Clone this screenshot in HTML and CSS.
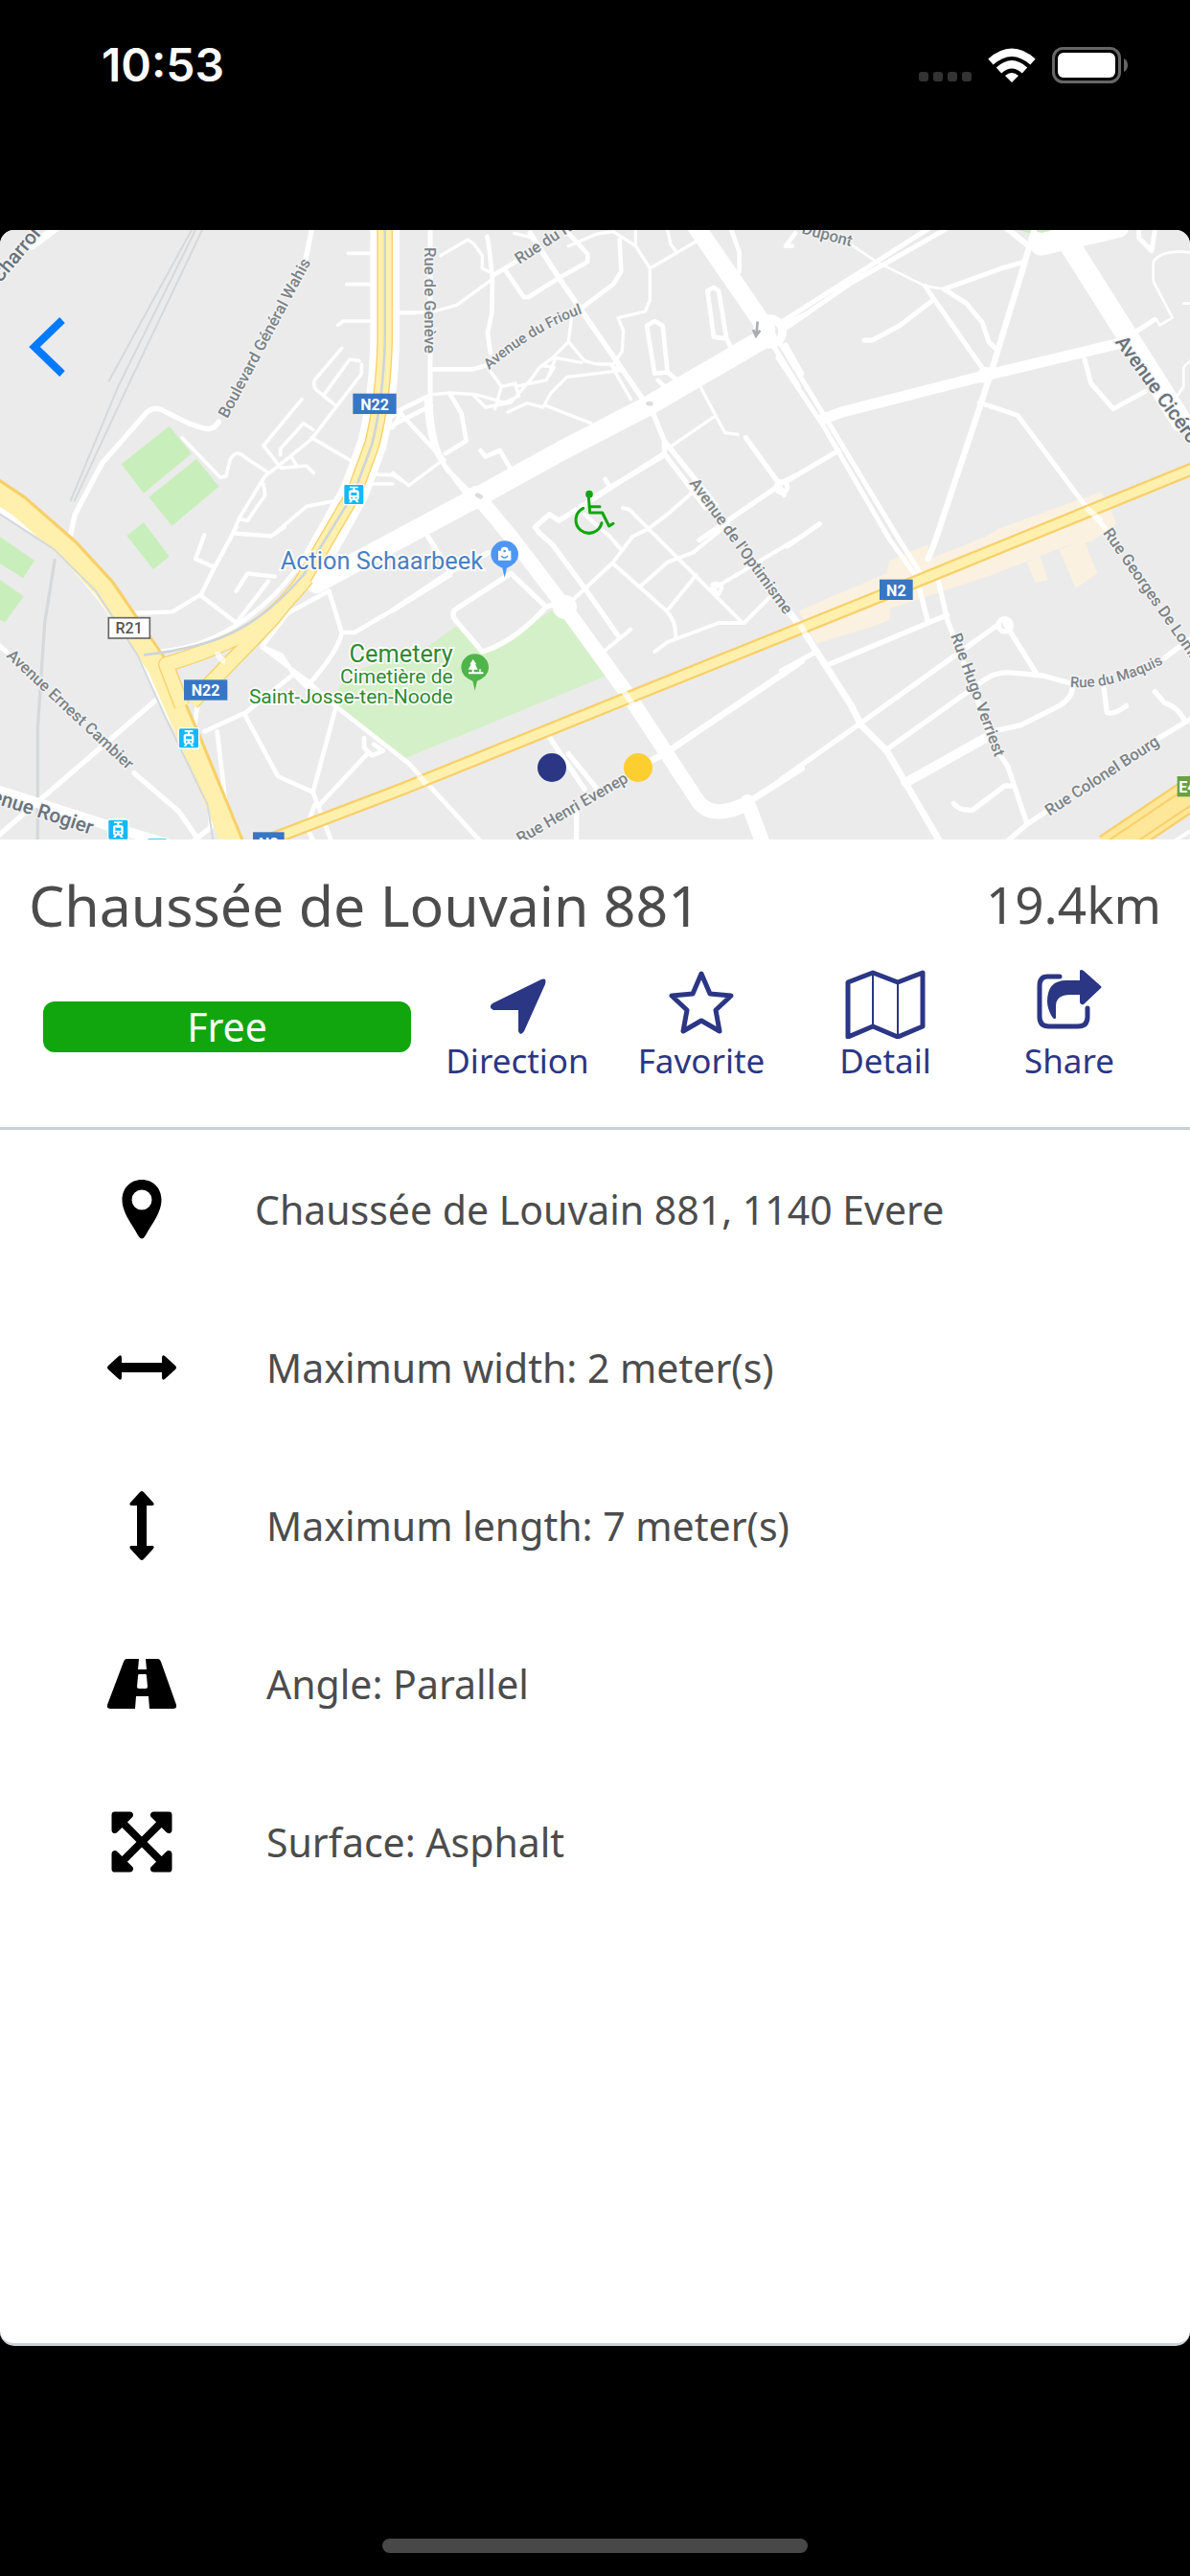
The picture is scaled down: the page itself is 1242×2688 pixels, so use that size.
FILE: index.html
```html
<!DOCTYPE html>
<html lang="en">
<head>
<meta charset="utf-8">
<meta name="viewport" content="width=device-width, initial-scale=1">
<title>Chaussée de Louvain 881</title>
<link rel="stylesheet" href="styles.css">
</head>
<body>
<div class="screen">
  <header class="status">
    <time class="clock">10:53</time>
    <div class="indicators">
      <div class="cell"><i></i><i></i><i></i><i></i></div>
      <svg class="wifi" viewBox="0 0 50 36" aria-label="Wi-Fi"><g fill="none" stroke="#fff" stroke-width="8"><path d="M3 14.500Q25 -5 47 14.500"/><path d="M11.500 23.500Q25 11 38.500 23.500"/></g><path d="M18 29Q25 23 32 29L25 36z" fill="#fff"/></svg>
      <svg class="battery" viewBox="0 0 80 38" aria-label="Battery"><rect x="1.500" y="1.500" width="69" height="35" rx="10" fill="none" stroke="#666" stroke-width="3"/><rect x="6" y="6" width="60" height="26" rx="6" fill="#fff"/><path d="M75 12q4 2 4 7t-4 7z" fill="#666"/></svg>
    </div>
  </header>

  <main class="card">
    <section class="map">
      <svg class="map-art" viewBox="0 0 3726 1908" preserveAspectRatio="xMidYMid slice">
        <defs>
          <g id="tram"><rect x="-32" y="-32" width="64" height="64" rx="6" fill="#14b9fb" stroke="#fff" stroke-width="4"/><path d="M-13 -25h26v5H3v6h5q8 0 8 8v18q0 5-5 5l5 8h-8l-4-7h-8l-4 7h-8l5-8q-5 0-5-5v-18q0-8 8-8h5v-6h-10z" fill="#fff"/><path d="M-9 -6h18v9H-9zM-9 8h5v5h-5zM4 8h5v5H4z" fill="#14b9fb"/></g>
        </defs>
        <rect width="3726" height="1908" fill="#ebebeb"/>

        <!-- parks and shopping areas -->
        <g fill="#c8efbb">
          <path d="M380 733L530 614L600 700L450 824zM466 836L615 717L686 803L538 926zM397 957L450 915L530 1022L480 1062zM0 960L108 1035L72 1090L0 1045zM0 1095L74 1147L16 1228L0 1220z"/>
          <path d="M3190 0H3330V20L3280 28z"/>
        </g>
        <path d="M1345 1300L1430 1240L1510 1320L1590 1275L1730 1190L1790 1230L1895 1397L1260 1657L1060 1500V1430L1140 1370z" fill="#d4f0c8"/>
        <g fill="#faf1e0" transform="translate(2466 930)">
          <path d="M35 262L310 145L320 105L400 70L440 55L445 100L620 30L660 5L980 -110L1010 -60L1030 -10L950 45L870 60L640 150L430 220L320 255V290L270 310L90 365z"/><path d="M750 110L790 90L815 165L775 175zM850 70L930 45L970 145L902 192z"/>
        </g>

        <g fill="none" stroke="#d5d9dc" stroke-width="6">
          <path d="M600 0L430 310L340 475M612 0L370 490L220 850M633 0L395 500L232 850"/>
          <path d="M172 1030L140 1230L118 1560V1908" stroke-width="10"/>
        </g>

        <!-- minor streets -->
        <g class="road" stroke-width="16">
          <g transform="translate(0 -30)">
            <path d="M180 20L100 80" stroke-width="24"/>
            <path d="M978 20L955 130M685 630Q670 660 635 650L590 635L510 595Q485 580 460 600L320 760L235 920L215 1010"/>
            <path stroke-width="11" d="M1165 103H1090M1165 200H1085M1165 315H1075L1058 328M1070 400L985 500Q980 520 990 530L1045 575M1125 440L1095 435L1015 545M1132 450V480L975 685L870 770L830 800L750 930L720 1000M945 560L825 705L880 775L960 768L982 790M878 735V715L950 635L980 655M915 745L930 770M975 680L1095 750M570 680L690 805L708 800L720 750Q740 715 765 740L840 790M825 825L830 860L775 940L750 935M1170 795L1230 797L1260 815M1150 825H1230M1240 290H1300M1205 630L1260 590L1230 650L1210 648M730 980L850 988L960 895L1050 878"/>
            <path d="M-20 895L150 1000" stroke-width="18"/>
          </g>
          <g transform="translate(1230 -30)">
            <path d="M117 0V560Q120 700 170 780L250 860M105 560Q110 690 150 750L240 870" stroke-width="15"/>
            <path d="M430 40L520 180L790 570" stroke-width="17"/>
            <path d="M125 466H250L290 455M295 50L300 75L312 180L310 290L297 350L305 415M410 240L425 240L520 180L610 130V105L550 40M710 60L715 160L690 200L590 275M355 160L410 240M310 175L400 120L430 100" stroke-width="14"/>
            <path stroke-width="10" d="M20 288H117L200 265L310 185M150 110L235 60L255 75L280 110V150L310 165M380 40L440 55M550 80L640 42L690 35L760 80L805 150V250L790 285L705 305L722 345L718 410L690 450H640L600 440L550 380L500 430L460 460L430 500L370 570L290 585L250 545M560 300L550 380M590 445L510 430L490 480M300 465L340 520L320 590M125 545L180 540L260 545L350 570L395 550L385 520L480 500L505 460L470 455M360 600L420 572L470 585L495 540L545 490L715 470L685 455L745 560M480 580L620 635M340 520L385 510M860 30L870 75L885 95M805 150L960 60M760 30V75M960 515L1010 610L1040 665L1080 670M1005 615L860 715M0 790L50 830L150 755"/>
            <path stroke-width="14" d="M180 545L215 605L230 690L165 730M275 720L290 740L335 720L370 780M0 605L110 550M0 640L120 580M20 600L160 750M795 330L820 315L845 330L860 475L820 480zM860 475L890 500M830 500L850 520M985 220L1005 210L1020 220L1045 370L1005 365zM1045 370L1060 400M1060 30L1085 100V160M1250 80H1230L1260 40M665 810L680 835"/>
            <path d="M805 580L850 690L1010 890M850 730L980 900M850 690V730L520 940L490 920L445 960L460 980L500 1015L600 1150L705 1300M850 735L640 860M1105 680L1210 825L1260 800M1210 830L960 1000M1210 830L1225 860" stroke-width="16"/>
            <path stroke-width="12" d="M720 900L740 905L800 965L1090 1255M600 920L680 990L710 1025M940 850L860 920L800 965L750 990L690 1070L540 1210M1050 950L940 1040L860 1070L775 1145M950 1110L860 1220M1190 1170L1100 1260H1020L860 1320L820 1350M690 1075L855 1220Q890 1260 885 1305M1260 1000L1000 1155M660 1350L745 1280M1000 1140Q1020 1130 1030 1150L1020 1170L1000 1150"/>
            <path d="M1190 390L1270 520M1230 390L1280 480M1220 330L1300 290" stroke-width="16"/>
            <circle cx="1180" cy="348" r="40" stroke-width="26"/><circle cx="265" cy="867" r="25" stroke-width="24"/><circle cx="1218" cy="835" r="17"/>
          </g>
          <g transform="translate(2466 -30)">
            <path stroke-width="15" d="M-30 325L450 20M-10 340L200 195L500 25M-20 390L120 620L350 1000L420 1110M-30 430L110 640L320 1000L400 1110"/>
            <path d="M110 622L170 600L620 485L1040 385" stroke-width="34"/>
            <path d="M775 20L740 140L645 450L600 590L460 1010L440 1060" stroke-width="19"/>
            <path d="M680 20L755 80L860 85M780 45L860 60" stroke-width="18"/>
            <path stroke-width="15" d="M740 130L670 150L490 215L560 260L610 320L630 380L650 400M430 205L615 470M455 250L350 330L265 375H240M600 570L720 610L930 890L1000 970M1080 355L1150 310M930 435L950 510L1020 590L1120 535M0 815L160 720M0 1020L100 950M1100 30V55L1140 95L1150 30"/>
            <path stroke-width="8" d="M190 70L280 130L430 205L490 215M1155 310L1165 328L1205 305L1145 190V130Q1170 90 1260 100M1260 440L1240 460V520L1220 550M1240 260H1260"/>
            <circle cx="621" cy="484" r="18"/>
          </g>
          <g transform="translate(0 930)">
            <path d="M640 25L612 100L670 125M740 0L670 130L630 210L540 265L410 270M630 215L740 300L840 170M740 200L775 145L860 155M735 20L850 28L890 0" stroke-width="13"/>
            <path d="M200 90L310 220L430 390L500 540L600 720L660 870V940L610 980M-10 365L20 390M420 770L560 890L615 970M-10 970L130 850L490 540"/>
            <path d="M-20 820L420 960L520 990" stroke-width="32"/>
            <path stroke-width="14" d="M490 390Q700 380 880 190L1060 -20M640 640L770 580L920 460L880 400L820 375L900 270L1030 200L1070 330H1110L1280 230L1410 150M1070 330Q1060 390 960 500L920 460M820 375L960 480L1050 560L1280 740L1510 990M765 585L870 780L980 830L1050 570M980 830L1040 990M985 870L960 940L985 990M1000 870L1150 710M1140 660V690L1165 715L1200 700L1170 680M620 540L610 620M680 640L720 980" />
          </g>
          <g transform="translate(1230 930)">
            <path d="M110 30L145 85L180 140L0 260M180 140L300 80M370 145L200 255Q180 270 195 290L280 390Q380 360 480 250L370 145M480 250L510 240M485 650L600 820M550 710L640 820M575 890V990L610 1000"/>
            <path d="M810 730L850 710L1280 420M1130 850L1280 755" stroke-width="20"/>
          </g>
          <g transform="translate(2466 930)">
            <path d="M0 260L40 310L200 560L230 620L310 700L480 990" stroke-width="21"/>
            <path d="M-20 790L220 620L660 305M470 160L500 290L650 690M410 180L440 300L500 275M440 300L130 430M-20 450L90 390M680 300L780 460M650 690L690 750L750 930L680 990M305 700L600 490Q640 455 690 455L800 465L890 490Q900 530 850 560L730 620L640 640M990 500L1000 580Q1020 590 1060 560M1150 515L1180 550Q1220 560 1245 610M750 930L840 870M1130 680L1280 590M520 865Q540 890 580 885L680 810H705M1180 410L1260 350"/>
            <path d="M370 800L620 660" stroke-width="30"/><circle cx="680" cy="307" r="20"/><path d="M1200 990L1280 940" stroke-width="12"/>
          </g>
        </g>

        <!-- avenues -->
        <g class="road">
          <path d="M990 1106L1495 836L1760 690L2030 550L2400 335" stroke-width="62"/>
          <path d="M2180 -10L2400 310" stroke-width="56"/>
          <path d="M3320 0L3700 600" stroke-width="66"/><path d="M3260 45L3500 -10" stroke-width="70"/>
          <path d="M1500 840L1600 960L1760 1170L1970 1460L2180 1780Q2220 1850 2330 1800M2340 1790L2400 1950" stroke-width="46"/>
          <circle cx="1768" cy="1180" r="22" stroke-width="32"/>
        </g>
        <path d="M1495 830l10 5M2030 543l8 1" stroke="#ddd" stroke-width="14" stroke-linecap="round"/>

        <!-- main roads -->
        <g fill="none" stroke-linejoin="round">
          <path d="M1205 -20V350Q1200 530 1165 670L1110 820L960 1090" stroke="#fff" stroke-width="92"/>
          <path d="M-30 800L60 860L220 1000L330 1120L500 1370L600 1600L740 1940" stroke="#f8d06a" stroke-width="68"/>
          <path d="M-35 805L55 865L215 1005L325 1125L493 1370L593 1600L733 1940" stroke="#fff0ad" stroke-width="62"/>
          <path d="M-30 870L170 1000L300 1130L430 1330L520 1530L650 1800L670 1930" stroke="#d5d9dc" stroke-width="6"/>
          <path d="M545 1375L800 1272L655 1402L575 1430z" fill="#ebebeb"/>
          <path d="M1205 -20V350Q1200 530 1165 670L1110 820L940 1110L850 1220L600 1480M960 1090Q860 1215 760 1268Q640 1325 520 1360L570 1490" stroke="#f8d06a" stroke-width="50"/>
          <path d="M1205 -20V350Q1200 530 1165 670L1110 820L940 1110L850 1220L600 1480M960 1090Q860 1215 760 1268Q640 1325 520 1360L570 1490" stroke="#fff0ad" stroke-width="42"/>
          <path d="M1205 0V350Q1200 530 1165 670L1110 820L950 1080Q850 1195 752 1248Q640 1310 450 1330" stroke="#cfd4d7" stroke-width="8"/>
          <path d="M820 1918L1260 1750L1965 1465L2870 1100L3740 745" stroke="#f8d06a" stroke-width="42"/>
          <path d="M820 1918L1260 1750L1965 1465L2870 1100L3740 745" stroke="#fff0ad" stroke-width="28"/>
          <path d="M3470 1940L3760 1745" stroke="#f8d06a" stroke-width="104"/><path d="M3470 1940L3760 1745" stroke="#ffe79a" stroke-width="90"/><path d="M3450 1925L3740 1730M3500 1955L3790 1760" stroke="#f8d06a" stroke-width="6"/>
          <path d="M680 1320Q685 1345 705 1350M1950 1440L1985 1490M2505 1235L2525 1270M3400 870L3450 910M1310 1705L1335 1735" stroke="#fff" stroke-width="18" opacity=".7"/>
        </g>

        <use href="#tram" x="1108" y="828"/><use href="#tram" x="591" y="1591"/><use href="#tram" x="370" y="1877"/><use href="#tram" x="492" y="1936"/>

        <g class="shield">
          <rect x="1105" y="512" width="136" height="64"/><text x="1173" y="564">N22</text>
          <rect x="576" y="1408" width="136" height="64"/><text x="644" y="1458">N22</text>
          <rect x="2754" y="1094" width="104" height="64"/><text x="2806" y="1146">N2</text>
          <rect x="792" y="1885" width="98" height="64"/><text x="841" y="1937">N2</text>
          <rect class="shield-e" x="3686" y="1710" width="100" height="64"/><text x="3732" y="1762">E40</text>
          <rect class="shield-r" x="340" y="1214" width="129" height="64"/><text class="shield-r-text" x="404" y="1263">R21</text>
        </g>

        <g class="street">
          <path id="frioul" d="M1532 438Q1650 330 1815 264L1900 234" fill="none" stroke="none"/>
          <path id="maquis" d="M3350 1430Q3500 1445 3700 1325" fill="none" stroke="none"/>
          <text transform="translate(712 592) rotate(-62)">Boulevard Général Wahis</text>
          <text transform="translate(1330 54) rotate(90)">Rue de Genève</text>
          <text transform="translate(1626 108) rotate(-33)">Rue du R</text>
          <text class="curved"><textPath href="#frioul">Avenue du Frioul</textPath></text>
          <text transform="translate(2508 10) rotate(15)">Dupont</text>
          <text transform="translate(2157 793) rotate(54)">Avenue de l'Optimisme</text>
          <text transform="translate(3452 948) rotate(55)">Rue Georges De Lomba</text>
          <text transform="translate(2976 1270) rotate(70)">Rue Hugo Verriest</text>
          <text class="curved"><textPath href="#maquis">Rue du Maquis</textPath></text>
          <text transform="translate(3286 1835) rotate(-33)">Rue Colonel Bourg</text>
          <text transform="translate(1630 1922) rotate(-30)">Rue Henri Evenep</text>
          <text transform="translate(18 1335) rotate(43)">Avenue Ernest Cambier</text>
        </g>
        <g class="street avenue">
          <text transform="translate(-54 232) rotate(-50)">de Charroi</text>
          <text transform="translate(3490 350) rotate(54)">Avenue Cicéron</text>
          <text text-anchor="end" transform="translate(284 1892) rotate(18)">Avenue Rogier</text>
        </g>

        <g class="place" text-anchor="end">
          <text class="shop" x="1512" y="1062">Action Schaarbeek</text>
          <text x="1418" y="1352" font-size="76">Cemetery</text>
          <text x="1418" y="1418" font-size="63">Cimetière de</text>
          <text x="1418" y="1481" font-size="63">Saint-Josse-ten-Noode</text>
        </g>
        <g transform="translate(1580 1016)"><path d="M0 72L-7 42Q-43 26 -43 0A43 43 0 0 1 43 0Q43 26 7 42z" fill="#4d96f4"/><path d="M-20 -12h8q0-12 12-12t12 12h8v30h-40z" fill="#fff"/><path d="M-10 4q10 12 20 0" fill="none" stroke="#4d96f4" stroke-width="4"/><circle cy="-11" r="4" fill="#4d96f4"/></g>
        <g transform="translate(1487 1370)"><path d="M0 72L-7 42Q-43 26 -43 0A43 43 0 0 1 43 0Q43 26 7 42z" fill="#4fb549"/><path d="M-6 -26L5 -10H1L9 6H-3V14H14V4h4v10h8v6h-46v-6h11V6h-12L-12 -10h-4z" fill="#fff"/></g>
        <path d="M2372 287L2368 330M2358 312L2367 332L2380 314" fill="none" stroke="#a9adaf" stroke-width="8"/>
        <g fill="none" stroke="#11a60e" stroke-width="9" stroke-linecap="round" stroke-linejoin="round"><path d="M1843 835L1847 885H1886L1907 927L1920 919M1846 866H1878M1826 871A41 41 0 1 0 1884 917"/><circle cx="1845" cy="827" r="7" fill="#11a60e"/></g>
      </svg>
      <button class="back" type="button" aria-label="Back"><svg viewBox="0 0 38 64"><path d="M35 4L6 32L35 60" fill="none" stroke="#007aff" stroke-width="8"/></svg></button>
      <div class="pager"><button type="button" class="dot" aria-label="Map"></button><button type="button" class="dot dot-alt" aria-label="Photo"></button></div>
    </section>

    <section class="summary">
      <div class="heading">
        <h1 class="title">Chaussée de Louvain 881</h1>
        <span class="distance">19.4km</span>
      </div>
      <div class="actions">
        <span class="badge">Free</span>
        <button class="action" type="button"><svg viewBox="0 0 90 72"><path d="M70 10Q76 8 74 15L52 64Q48 70 46 64V42H20Q14 39 19 35z" fill="currentColor"/></svg>Direction</button>
        <button class="action" type="button"><svg viewBox="0 0 90 72"><path d="M45 4L54 25L76 27L60 42L64 64L45 53L26 64L30 42L14 27L36 25z" fill="none" stroke="currentColor" stroke-width="5" stroke-linejoin="round"/></svg>Favorite</button>
        <button class="action" type="button"><svg viewBox="0 0 90 72"><g fill="none" stroke="currentColor" stroke-linejoin="round"><path d="M6 13L32 3L58 13L84 3V59L58 70L32 59L6 70z" stroke-width="5"/><path d="M32 3V59M58 13V70" stroke-width="2"/></g></svg>Detail</button>
        <button class="action" type="button"><svg viewBox="0 0 90 72"><path d="M35 7H22Q14 7 14 17V49Q14 59 24 59H54Q64 59 64 49V40" fill="none" stroke="currentColor" stroke-width="5" stroke-linecap="round"/><path d="M56 1Q57 -1 60 1L78 17Q79 18 78 19L60 36Q57 37 56 34V26H46Q31 26 31 38V50Q30 53 27 49Q22 40 22 33Q22 11 42 11H56z" fill="currentColor"/></svg>Share</button>
      </div>
    </section>

    <ul class="details">
      <li class="row row-address"><svg class="icon" viewBox="0 0 72 72"><path d="M36 5C24 5 15.500 14 15.500 26C15.500 40 27 53 32 63Q36 70 40 63C45 53 56.500 40 56.500 26C56.500 14 48 5 36 5zM36 15.500a10.500 10.500 0 1 1 0 21a10.500 10.500 0 1 1 0 -21z"/></svg><span>Chaussée de Louvain 881, 1140 Evere</span></li>
      <li class="row"><svg class="icon" viewBox="0 0 72 72"><path id="arrows" d="M1 34L12 24Q15 22 15 26V31H57V26Q57 22 60 24L71 34Q73 36 71 38L60 48Q57 50 57 46V41H15V46Q15 50 12 48L1 38Q-1 36 1 34z"/></svg><span>Maximum width: 2 meter(s)</span></li>
      <li class="row"><svg class="icon" viewBox="0 0 72 72"><use href="#arrows" transform="rotate(90 36 36)"/></svg><span>Maximum length: 7 meter(s)</span></li>
      <li class="row"><svg class="icon" viewBox="0 0 72 72"><path fill-rule="evenodd" d="M20 10H33L32 21H41L40 10H53Q55 10 56 13L72 58Q73 62 69 62H44L43 49H30L29 62H3Q-1 62 0 58L17 13Q18 10 20 10zM33 26H40Q41 26 41 28L42 39Q42 41 40 41H33Q31 41 31 39L32 28Q32 26 33 26z"/></svg><span>Angle: Parallel</span></li>
      <li class="row"><svg class="icon" viewBox="0 0 448 512"><path d="M448 344v112a23.940 23.940 0 0 1-24 24H312c-21.390 0-32.090-25.900-17-41l36.200-36.200L224 295.600 116.770 402.900 153 439c15.090 15.100 4.390 41-17 41H24a23.940 23.940 0 0 1-24-24V344c0-21.400 25.890-32.100 41-17l36.190 36.200L184.460 256 77.180 148.700 41 185c-15.100 15.100-41 4.400-41-17V56a23.940 23.940 0 0 1 24-24h112c21.390 0 32.090 25.900 17 41l-36.200 36.200L224 216.400l107.230-107.300L295 73c-15.090-15.100-4.390-41 17-41h112a23.940 23.940 0 0 1 24 24v112c0 21.400-25.890 32.100-41 17l-36.190-36.200L263.540 256l107.280 107.300L407 327.100c15.100-15.200 41-4.500 41 16.900z"/></svg><span>Surface: Asphalt</span></li>
    </ul>
  </main>

  <footer class="home"><div class="home-bar"></div></footer>
</div>
</body>
</html>
```
FILE: styles.css
```css
* { box-sizing: border-box; }

body {
  margin: 0;
  background: #000;
  color: #4c4c4c;
  font-family: "Noto Sans", "Open Sans", sans-serif;
}

button {
  border: 0;
  padding: 0;
  background: none;
  font: inherit;
  color: inherit;
}

svg { display: block; }

.screen {
  display: flex;
  flex-direction: column;
  min-height: 100vh;
}

/* status bar */
.status {
  display: flex;
  justify-content: space-between;
  align-items: flex-start;
  height: 240px;
  padding: 49px 64px 0 106px;
}

.clock {
  color: #fff;
  font-family: Inter, sans-serif;
  font-size: 48px;
  font-weight: 600;
  line-height: 38px;
}

.indicators {
  display: flex;
  align-items: flex-end;
  gap: 17px;
}

.cell { display: flex; gap: 5px; padding-bottom: 2px; }
.cell i { width: 10px; height: 10px; border-radius: 3px; background: #333; }
.wifi { width: 50px; height: 38px; }
.battery { width: 80px; height: 38px; }

/* card */
.card {
  flex: 1;
  overflow: hidden;
  border-bottom: 3px solid #c9d0d6;
  border-radius: 15px;
  background: #fff;
}

.map { position: relative; height: 636px; overflow: hidden; }
.map-art { width: 100%; height: 100%; font-family: Roboto, sans-serif; }
.road { fill: none; stroke: #fff; stroke-linecap: round; stroke-linejoin: round; }

.street {
  fill: #7b8387;
  stroke: #f4f4f4;
  stroke-width: 8px;
  paint-order: stroke;
  font-size: 50px;
  font-weight: 500;
}
.curved { font-size: 46px; }
.avenue { fill: #68727a; font-size: 62px; }

.place {
  fill: #2e8a32;
  stroke: #fff;
  stroke-width: 10px;
  paint-order: stroke;
}
.shop { fill: #4a7fc4; font-size: 76px; }

.shield { fill: #3776c4; font-size: 48px; font-weight: 700; text-anchor: middle; }
.shield text { fill: #fff; }
.shield .shield-e { fill: #67a243; }
.shield .shield-r { fill: #fff; stroke: #666; stroke-width: 5px; }
.shield .shield-r-text { fill: #555; font-weight: 500; }

.back { position: absolute; top: 90px; left: 30px; width: 38px; height: 64px; }

.pager {
  position: absolute;
  right: 0;
  bottom: 60px;
  left: 0;
  display: flex;
  justify-content: center;
  gap: 60px;
}
.dot { width: 30px; height: 30px; border-radius: 50%; background: #2b3684; }
.dot-alt { background: #fdce30; }

/* summary */
.summary {
  padding: 32px 30px 46px;
  border-bottom: 3px solid #c9d0d8;
}

.heading {
  display: flex;
  justify-content: space-between;
  align-items: center;
  margin-bottom: 32px;
}
.title { margin: 0; font-size: 59px; font-weight: 400; line-height: 72px; }
.distance { font-size: 53px; line-height: 72px; }

.actions {
  display: grid;
  grid-template-columns: 414fr repeat(4, 192fr);
  align-items: center;
}
.badge {
  margin: 0 15px;
  border-radius: 12px;
  background: #11a60e;
  color: #fff;
  font-size: 41px;
  line-height: 53px;
  text-align: center;
}
.action {
  display: flex;
  flex-direction: column;
  align-items: center;
  color: #2b3684;
  font-size: 35px;
  line-height: 46px;
}
.action svg { width: 90px; height: 72px; }

/* details */
.details { margin: 0; padding: 0; list-style: none; }
.row {
  display: flex;
  align-items: center;
  gap: 94px;
  height: 165px;
  padding-left: 112px;
  font-size: 41px;
  line-height: 56px;
}
.row-address { gap: 82px; }
.icon { flex: none; width: 72px; height: 72px; }

/* home indicator */
.home {
  display: flex;
  justify-content: center;
  align-items: flex-end;
  height: 240px;
  padding-bottom: 24px;
}
.home-bar { width: 444px; height: 15px; border-radius: 8px; background: #484848; }
```
